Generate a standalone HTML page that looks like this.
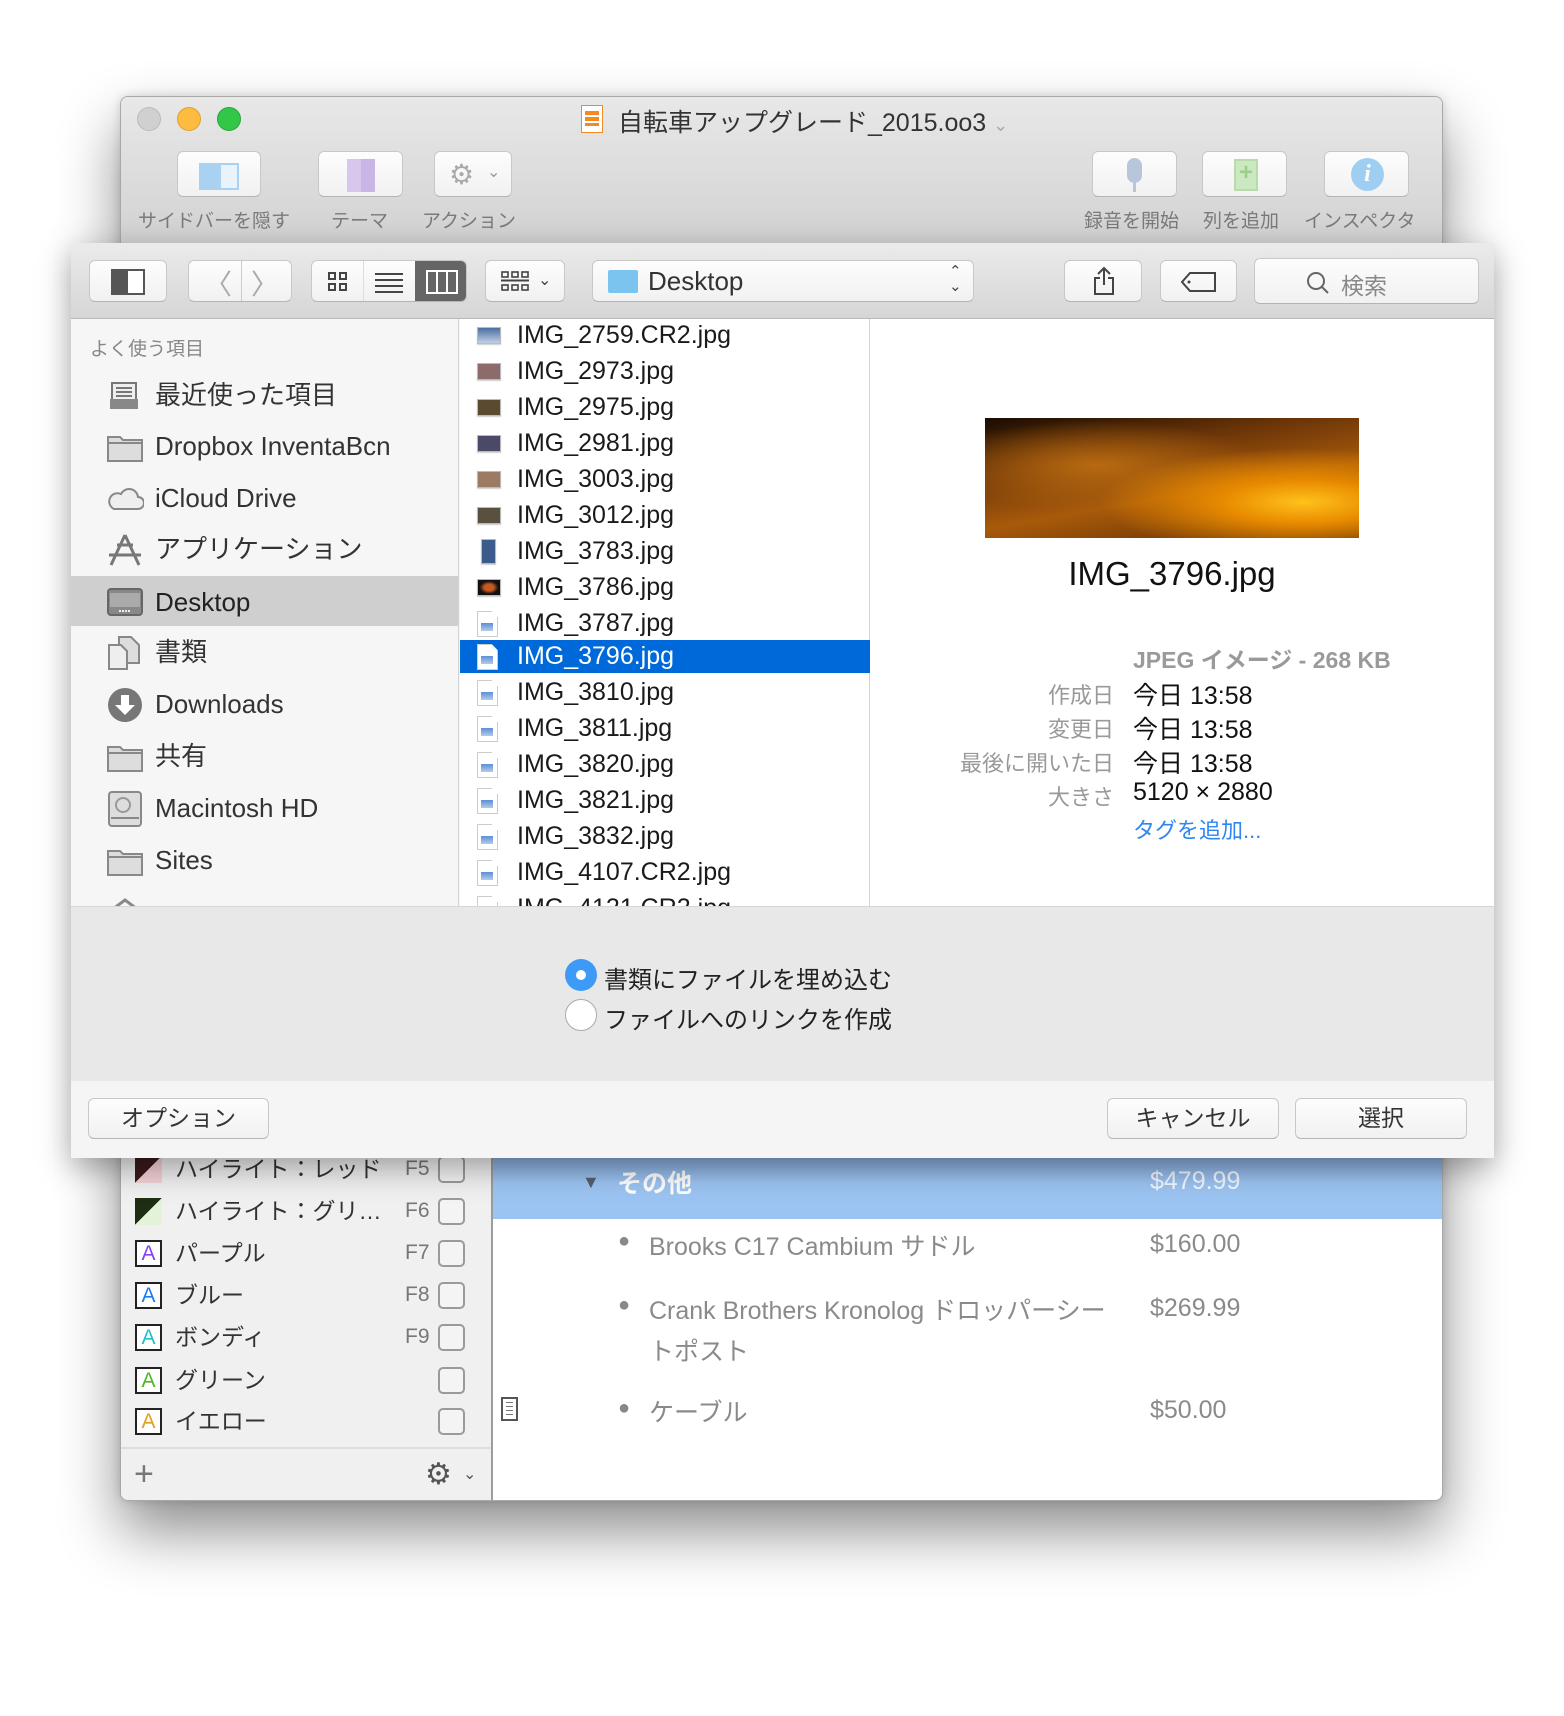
<!DOCTYPE html>
<html><head><meta charset="utf-8">
<style>
*{box-sizing:border-box;margin:0;padding:0}
body{width:1564px;height:1716px;background:#fff;position:relative;overflow:hidden;font-family:"Liberation Sans","Noto Sans CJK JP",sans-serif;color:#222}
.a{position:absolute}
.btn{position:absolute;background:linear-gradient(#fdfdfd,#f1f1f1);border:1px solid #c8c8c8;border-bottom-color:#b4b4b4;border-radius:6px}
.lbl{position:absolute;font-size:19px;color:#7a7a7a;white-space:nowrap}
.side{position:absolute;left:0;width:388px;height:52px;font-size:26px;color:#333;line-height:52px;padding-left:84px;white-space:nowrap}
.file{position:absolute;left:0;width:410px;height:33px;line-height:33px;font-size:25px;padding-left:57px;color:#1a1a1a;white-space:nowrap}
.th{position:absolute;left:17px;top:8px;width:24px;height:17px;border:1px solid #bbb;box-shadow:0 1px 1px rgba(0,0,0,.2)}
.doc{position:absolute;left:17px;top:4px;width:21px;height:26px;background:#fff;border:1px solid #ccc;clip-path:polygon(0 0,70% 0,100% 25%,100% 100%,0 100%)}
.doc:after{content:"";position:absolute;left:3px;top:11px;width:12px;height:8px;background:linear-gradient(#5a8fd8,#b7cbe6);}
.il{position:absolute;font-size:22px;color:#999;text-align:right;width:300px;left:814px}
.iv{position:absolute;font-size:25px;color:#111;left:1133px;white-space:nowrap}
.hl{position:absolute;left:0;width:360px;height:42px;font-size:23px;color:#333;line-height:42px}
.hl .ic{position:absolute;left:15px;top:8px;width:27px;height:27px;border:2px solid #222;background:#fff;font-size:21px;line-height:23px;text-align:center}
.hl .t{position:absolute;left:55px}
.hl .f{position:absolute;left:285px;color:#777;font-size:21px}
.hl .cb{position:absolute;left:318px;top:8px;width:27px;height:27px;border:2px solid #9a9a9a;border-radius:5px;background:#f4f4f4}
</style></head><body>

<div class="a" style="left:120px;top:96px;width:1323px;height:1405px;border-radius:8px;background:#fff;border:1px solid #a8a8a8;box-shadow:0 30px 60px rgba(0,0,0,.45),0 0 10px rgba(0,0,0,.15);overflow:hidden">
  <div class="a" style="left:0;top:0;width:1323px;height:147px;background:linear-gradient(#e8e8e8,#d2d2d2);border-bottom:1px solid #b0b0b0"></div>
  <div class="a" style="left:0;top:1061px;width:372px;height:344px;background:#f0f0f0;border-right:2px solid #9c9c9c"></div>
  <div class="a" style="left:372px;top:1061px;width:951px;height:61px;background:linear-gradient(#87aad8,#9cc4f2 40%,#9cc4f2)"></div>
</div>
<div class="a" style="left:137px;top:107px;width:24px;height:24px;border-radius:50%;background:#d0d0d0;border:1px solid #bbb"></div>
<div class="a" style="left:177px;top:107px;width:24px;height:24px;border-radius:50%;background:#fdbc40;border:1px solid #e0a030"></div>
<div class="a" style="left:217px;top:107px;width:24px;height:24px;border-radius:50%;background:#33c748;border:1px solid #27a83a"></div>
<div class="a" style="left:581px;top:105px;width:22px;height:28px;background:#fff;border:1px solid #f08a24"><div style="margin:5px 3px;height:15px;background:repeating-linear-gradient(#f5891f 0 4px,#fff 4px 6px)"></div></div>
<div class="a" style="left:618px;top:103px;font-size:25px;color:#333;white-space:nowrap">自転車アップグレード_2015.oo3 <span style="color:#aaa;font-size:18px">⌄</span></div>
<div class="btn" style="left:177px;top:151px;width:84px;height:46px"><div class="a" style="left:21px;top:11px;width:40px;height:27px;background:#a8d1f2"><div style="position:absolute;left:20px;top:0;width:20px;height:27px;background:#e8f3fc;border:2px solid #a8d1f2"></div></div></div>
<div class="btn" style="left:318px;top:151px;width:85px;height:46px"><div class="a" style="left:28px;top:7px;width:28px;height:33px;background:linear-gradient(90deg,#d7c7ec 50%,#c9b6e6 50%)"></div></div>
<div class="btn" style="left:434px;top:151px;width:78px;height:46px"><div class="a" style="left:14px;top:6px;font-size:28px;color:#aaa">⚙</div><div class="a" style="left:52px;top:10px;font-size:16px;color:#999">⌄</div></div>
<div class="lbl" style="left:138px;top:206px">サイドバーを隠す</div>
<div class="lbl" style="left:331px;top:206px">テーマ</div>
<div class="lbl" style="left:422px;top:206px">アクション</div>
<div class="btn" style="left:1092px;top:151px;width:85px;height:46px"><div class="a" style="left:34px;top:6px;width:15px;height:25px;border-radius:8px;background:#b8c6dc"></div><div class="a" style="left:40px;top:30px;width:3px;height:10px;background:#b8c6dc"></div></div>
<div class="btn" style="left:1202px;top:151px;width:85px;height:46px"><div class="a" style="left:31px;top:7px;width:24px;height:32px;background:#cce8c2;border:2px solid #b8dca8;color:#9ecf8a;font-size:24px;line-height:24px;text-align:center;font-weight:bold">+</div></div>
<div class="btn" style="left:1324px;top:151px;width:85px;height:46px"><div class="a" style="left:26px;top:6px;width:33px;height:33px;border-radius:50%;background:#9ecff2;color:#fff;font:italic bold 24px 'Liberation Serif',serif;text-align:center;line-height:33px">i</div></div>
<div class="lbl" style="left:1084px;top:206px">録音を開始</div>
<div class="lbl" style="left:1203px;top:206px">列を追加</div>
<div class="lbl" style="left:1304px;top:206px">インスペクタ</div>

<div class="hl" style="left:120px;top:1148px"><div class="ic" style="border:none;background:linear-gradient(135deg,#3a1a1c 50%,#f3d3d6 50%)"></div><span class="t">ハイライト：レッド</span><span class="f">F5</span><div class="cb"></div></div>
<div class="hl" style="left:120px;top:1190px"><div class="ic" style="border:none;background:linear-gradient(135deg,#1e2e12 50%,#e3f2d8 50%)"></div><span class="t">ハイライト：グリ…</span><span class="f">F6</span><div class="cb"></div></div>
<div class="hl" style="left:120px;top:1232px"><div class="ic" style="color:#8a3ff0">A</div><span class="t">パープル</span><span class="f">F7</span><div class="cb"></div></div>
<div class="hl" style="left:120px;top:1274px"><div class="ic" style="color:#1a7ef0">A</div><span class="t">ブルー</span><span class="f">F8</span><div class="cb"></div></div>
<div class="hl" style="left:120px;top:1316px"><div class="ic" style="color:#22c0c8">A</div><span class="t">ボンディ</span><span class="f">F9</span><div class="cb"></div></div>
<div class="hl" style="left:120px;top:1359px"><div class="ic" style="color:#4cb822">A</div><span class="t">グリーン</span><div class="cb"></div></div>
<div class="hl" style="left:120px;top:1400px"><div class="ic" style="color:#e0a020">A</div><span class="t">イエロー</span><div class="cb"></div></div>
<div class="a" style="left:121px;top:1447px;width:370px;height:2px;background:#ddd"></div>
<div class="a" style="left:134px;top:1455px;font-size:34px;color:#777;font-weight:200">+</div>
<div class="a" style="left:425px;top:1457px;font-size:30px;color:#555">⚙</div><div class="a" style="left:463px;top:1464px;font-size:16px;color:#555">⌄</div>

<div class="a" style="left:582px;top:1172px;font-size:18px;color:#55606e">▼</div>
<div class="a" style="left:617px;top:1164px;font-size:25px;color:#fff;font-weight:bold">その他</div>
<div class="a" style="left:1150px;top:1167px;font-size:25px;color:#f4f8ff">$479.99</div>
<div class="a" style="left:618px;top:1230px;font-size:20px;color:#888">●</div>
<div class="a" style="left:649px;top:1227px;font-size:25px;color:#8a8a8a">Brooks C17 Cambium サドル</div>
<div class="a" style="left:1150px;top:1230px;font-size:25px;color:#8a8a8a">$160.00</div>
<div class="a" style="left:618px;top:1294px;font-size:20px;color:#888">●</div>
<div class="a" style="left:649px;top:1291px;font-size:25px;color:#8a8a8a;line-height:41px">Crank Brothers Kronolog ドロッパーシー<br>トポスト</div>
<div class="a" style="left:1150px;top:1294px;font-size:25px;color:#8a8a8a">$269.99</div>
<div class="a" style="left:501px;top:1397px;width:17px;height:24px;border:2px solid #555;background:repeating-linear-gradient(#fff 0 3px,#777 3px 4px);background-clip:content-box;padding:3px"></div>
<div class="a" style="left:618px;top:1397px;font-size:20px;color:#888">●</div>
<div class="a" style="left:649px;top:1393px;font-size:25px;color:#8a8a8a">ケーブル</div>
<div class="a" style="left:1150px;top:1396px;font-size:25px;color:#8a8a8a">$50.00</div>

<div class="a" style="left:71px;top:243px;width:1423px;height:915px;background:#f5f5f5;box-shadow:0 10px 30px rgba(0,0,0,.35);overflow:hidden">
  <div class="a" style="left:0;top:0;width:1423px;height:76px;background:linear-gradient(#ebebeb,#d6d6d6);border-bottom:1px solid #b8b8b8"></div>
  <div class="a" style="left:0;top:76px;width:388px;height:587px;background:#f6f6f6;border-right:1px solid #d4d4d4;overflow:hidden">
    <div class="a" style="left:19px;top:15px;font-size:19px;color:#888;white-space:nowrap">よく使う項目</div>
    <div class="a" style="left:0;top:257px;width:388px;height:50px;background:#cfcfcf"></div>
  </div>
  <div class="a" style="left:389px;top:76px;width:410px;height:587px;background:#fff;border-right:1px solid #d4d4d4;overflow:hidden"></div>
  <div class="a" style="left:799px;top:76px;width:624px;height:587px;background:#fff"></div>
  <div class="a" style="left:0;top:663px;width:1423px;height:175px;background:#e8e8e8;border-top:1px solid #d6d6d6"></div>
  <div class="a" style="left:0;top:838px;width:1423px;height:77px;background:#f5f5f5"></div>
</div>

<div class="a" style="left:71px;top:319px;width:388px;height:587px;overflow:hidden">
 <div class="side" style="top:50px"><svg class="a" style="left:37px;top:12px" width="32" height="30" viewBox="0 0 32 30"><rect x="4" y="2" width="24" height="20" fill="#eee" stroke="#777" stroke-width="2"/><path d="M8 7h16M8 11h16M8 15h16" stroke="#777" stroke-width="2"/><path d="M2 18h28v10H2z" fill="#888"/></svg>最近使った項目</div>
 <div class="side" style="top:101px"><svg class="a" style="left:36px;top:14px" width="36" height="28"><path d="M1 3h12l3 3h19v21H1z" fill="#ddd" stroke="#888" stroke-width="2"/><path d="M1 9h34" stroke="#888" stroke-width="2"/></svg>Dropbox InventaBcn</div>
 <div class="side" style="top:153px"><svg class="a" style="left:35px;top:15px" width="38" height="24"><path d="M8 22h24a6 6 0 0 0 0-12 9 9 0 0 0-17-3 7 7 0 0 0-7 15z" fill="#eee" stroke="#888" stroke-width="2"/></svg>iCloud Drive</div>
 <div class="side" style="top:204px"><svg class="a" style="left:36px;top:10px" width="36" height="34"><path d="M18 2L4 32M18 2l14 30M2 22h32M10 12h16" stroke="#777" stroke-width="3" fill="none"/></svg>アプリケーション</div>
 <div class="side" style="top:257px;color:#222"><svg class="a" style="left:36px;top:12px" width="36" height="28"><rect x="1" y="1" width="34" height="26" rx="3" fill="#888" stroke="#666" stroke-width="2"/><rect x="3" y="5" width="30" height="14" fill="#aaa"/><path d="M12 23h12" stroke="#eee" stroke-width="2" stroke-dasharray="2 1"/></svg>Desktop</div>
 <div class="side" style="top:307px"><svg class="a" style="left:37px;top:10px" width="34" height="34"><path d="M1 9h12l6 6v18H1z" fill="#eee" stroke="#888" stroke-width="2"/><path d="M11 1h12l8 8v18H19V15l-6-6h-2z" fill="#ddd" stroke="#888" stroke-width="2"/></svg>書類</div>
 <div class="side" style="top:359px"><svg class="a" style="left:36px;top:9px" width="36" height="36"><circle cx="18" cy="18" r="17" fill="#777"/><path d="M14 8h8v10h6l-10 10-10-10h6z" fill="#fff"/></svg>Downloads</div>
 <div class="side" style="top:411px"><svg class="a" style="left:36px;top:14px" width="36" height="28"><path d="M1 3h12l3 3h19v21H1z" fill="#ddd" stroke="#888" stroke-width="2"/><path d="M1 9h34" stroke="#888" stroke-width="2"/></svg>共有</div>
 <div class="side" style="top:463px"><svg class="a" style="left:37px;top:9px" width="34" height="36"><rect x="1" y="1" width="32" height="34" rx="3" fill="#ddd" stroke="#888" stroke-width="2"/><circle cx="15" cy="14" r="7" fill="none" stroke="#999" stroke-width="2"/><path d="M3 27h28" stroke="#888" stroke-width="2"/></svg>Macintosh HD</div>
 <div class="side" style="top:515px"><svg class="a" style="left:36px;top:14px" width="36" height="28"><path d="M1 3h12l3 3h19v21H1z" fill="#ddd" stroke="#888" stroke-width="2"/><path d="M1 9h34" stroke="#888" stroke-width="2"/></svg>Sites</div>
 <div class="side" style="top:567px"><svg class="a" style="left:36px;top:12px" width="36" height="28"><path d="M2 14L18 2l16 12" stroke="#888" stroke-width="3" fill="none"/></svg>· ·</div>
</div>

<div class="a" style="left:460px;top:319px;width:410px;height:587px;overflow:hidden">
 <div class="file" style="top:0"><div class="th" style="background:linear-gradient(#4a6ea0,#c0d0e8)"></div>IMG_2759.CR2.jpg</div>
 <div class="file" style="top:36px"><div class="th" style="background:#8c6b6b"></div>IMG_2973.jpg</div>
 <div class="file" style="top:72px"><div class="th" style="background:#5a4a30"></div>IMG_2975.jpg</div>
 <div class="file" style="top:108px"><div class="th" style="background:#4a4a68"></div>IMG_2981.jpg</div>
 <div class="file" style="top:144px"><div class="th" style="background:#9c7a64"></div>IMG_3003.jpg</div>
 <div class="file" style="top:180px"><div class="th" style="background:#5a5040"></div>IMG_3012.jpg</div>
 <div class="file" style="top:216px"><div class="th" style="left:21px;top:4px;width:15px;height:25px;background:#3c5a8c"></div>IMG_3783.jpg</div>
 <div class="file" style="top:252px"><div class="th" style="background:radial-gradient(#c85a20 30%,#111 60%)"></div>IMG_3786.jpg</div>
 <div class="file" style="top:288px"><div class="doc"></div>IMG_3787.jpg</div>
 <div class="file" style="top:321px;background:#0069d9;color:#fff"><div class="doc"></div>IMG_3796.jpg</div>
 <div class="file" style="top:357px"><div class="doc"></div>IMG_3810.jpg</div>
 <div class="file" style="top:393px"><div class="doc"></div>IMG_3811.jpg</div>
 <div class="file" style="top:429px"><div class="doc"></div>IMG_3820.jpg</div>
 <div class="file" style="top:465px"><div class="doc"></div>IMG_3821.jpg</div>
 <div class="file" style="top:501px"><div class="doc"></div>IMG_3832.jpg</div>
 <div class="file" style="top:537px"><div class="doc"></div>IMG_4107.CR2.jpg</div>
 <div class="file" style="top:573px"><div class="doc"></div>IMG_4121.CR2.jpg</div>
</div>

<div class="a" style="left:985px;top:418px;width:374px;height:120px;background:radial-gradient(ellipse at 85% 70%,#ffc21a 0,#e88a00 18%,transparent 45%),radial-gradient(ellipse at 30% 40%,#b86a10 0,transparent 45%),linear-gradient(170deg,#1a0c02 0,#6a3408 30%,#a85a0a 60%,#5a2a04 100%)"></div>
<div class="a" style="left:985px;top:555px;width:374px;text-align:center;font-size:33px;color:#111">IMG_3796.jpg</div>
<div class="a" style="left:1133px;top:641px;font-size:23px;color:#9a9a9a;font-weight:bold;white-space:nowrap">JPEG イメージ - 268 KB</div>
<div class="il" style="top:678px">作成日</div><div class="iv" style="top:676px">今日 13:58</div>
<div class="il" style="top:712px">変更日</div><div class="iv" style="top:710px">今日 13:58</div>
<div class="il" style="top:746px">最後に開いた日</div><div class="iv" style="top:744px">今日 13:58</div>
<div class="il" style="top:780px">大きさ</div><div class="iv" style="top:778px">5120 × 2880</div>
<div class="a" style="left:1133px;top:813px;font-size:22px;color:#2f86f0">タグを追加...</div>

<div class="btn" style="left:89px;top:260px;width:78px;height:42px"><div class="a" style="left:21px;top:8px;width:34px;height:26px;border:2px solid #555;background:linear-gradient(90deg,#555 50%,#fff 50%)"></div></div>
<div class="btn" style="left:188px;top:260px;width:104px;height:42px"><div class="a" style="left:52px;top:0;width:1px;height:40px;background:#ccc"></div><div class="a" style="left:15px;top:2px;font-size:28px;color:#aaa">〈</div><div class="a" style="left:62px;top:2px;font-size:28px;color:#aaa">〉</div></div>
<div class="btn" style="left:311px;top:260px;width:156px;height:42px;overflow:hidden"><div class="a" style="left:51px;top:0;width:1px;height:40px;background:#ddd"></div><div class="a" style="left:103px;top:0;width:53px;height:42px;background:#656565"></div>
 <svg class="a" style="left:15px;top:10px" width="22" height="22"><g fill="none" stroke="#444" stroke-width="2"><rect x="2" y="2" width="6" height="6"/><rect x="13" y="2" width="6" height="6"/><rect x="2" y="13" width="6" height="6"/><rect x="13" y="13" width="6" height="6"/></g></svg>
 <svg class="a" style="left:63px;top:10px" width="28" height="22"><path d="M0 3h28M0 9h28M0 15h28M0 21h28" stroke="#444" stroke-width="2"/></svg>
 <svg class="a" style="left:114px;top:9px" width="32" height="24"><rect x="1" y="1" width="30" height="22" fill="none" stroke="#fff" stroke-width="2"/><path d="M11 1v22M21 1v22" stroke="#fff" stroke-width="2"/></svg></div>
<div class="btn" style="left:485px;top:260px;width:80px;height:42px"><svg class="a" style="left:15px;top:10px" width="30" height="22"><g fill="none" stroke="#444" stroke-width="1.6"><rect x="1" y="1" width="6" height="5"/><rect x="11" y="1" width="6" height="5"/><rect x="21" y="1" width="6" height="5"/><rect x="1" y="14" width="6" height="5"/><rect x="11" y="14" width="6" height="5"/><rect x="21" y="14" width="6" height="5"/></g><path d="M0 9.5h28" stroke="#444" stroke-width="2"/></svg><div class="a" style="left:52px;top:9px;font-size:16px;color:#444">⌄</div></div>
<div class="btn" style="left:592px;top:260px;width:382px;height:42px"><div class="a" style="left:15px;top:9px;width:30px;height:23px;background:#7cc4f0;border-radius:2px"></div><div class="a" style="left:55px;top:5px;font-size:26px;color:#333">Desktop</div><div class="a" style="left:356px;top:3px;font-size:15px;color:#444;line-height:15px">⌃<br>⌄</div></div>
<div class="btn" style="left:1064px;top:260px;width:78px;height:42px"><svg class="a" style="left:27px;top:5px" width="24" height="30"><path d="M12 2v17M6 8l6-6 6 6M8 12H3v16h18V12h-5" fill="none" stroke="#444" stroke-width="2"/></svg></div>
<div class="btn" style="left:1160px;top:260px;width:77px;height:42px"><svg class="a" style="left:20px;top:11px" width="36" height="20"><path d="M9 1h25v18H9L1 10z" fill="none" stroke="#444" stroke-width="2"/><circle cx="8" cy="10" r="1.5" fill="#444"/></svg></div>
<div class="btn" style="left:1254px;top:258px;width:225px;height:46px"><svg class="a" style="left:51px;top:12px" width="24" height="24"><circle cx="10" cy="10" r="8" fill="none" stroke="#666" stroke-width="2"/><path d="M16 16l6 6" stroke="#666" stroke-width="2"/></svg><div class="a" style="left:86px;top:8px;font-size:23px;color:#888">検索</div></div>

<div class="a" style="left:565px;top:959px;width:32px;height:32px;border-radius:50%;background:#3d9bf7"><div style="margin:11px;width:10px;height:10px;border-radius:50%;background:#fff"></div></div>
<div class="a" style="left:604px;top:960px;font-size:24px;color:#222">書類にファイルを埋め込む</div>
<div class="a" style="left:565px;top:999px;width:32px;height:32px;border-radius:50%;background:#fff;border:1px solid #aaa"></div>
<div class="a" style="left:604px;top:1000px;font-size:24px;color:#222">ファイルへのリンクを作成</div>

<div class="btn" style="left:88px;top:1098px;width:181px;height:41px;text-align:center;font-size:23px;line-height:39px;color:#333">オプション</div>
<div class="btn" style="left:1107px;top:1098px;width:172px;height:41px;text-align:center;font-size:23px;line-height:39px;color:#333">キャンセル</div>
<div class="btn" style="left:1295px;top:1098px;width:172px;height:41px;text-align:center;font-size:23px;line-height:39px;color:#333">選択</div>
</body></html>
